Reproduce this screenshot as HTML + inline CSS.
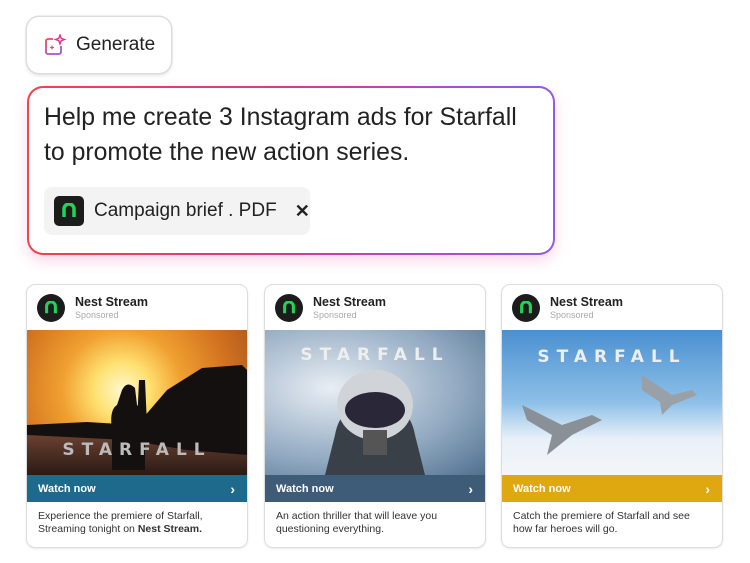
<!DOCTYPE html>
<html><head><style>
*{margin:0;padding:0;box-sizing:border-box}
body{width:750px;height:563px;background:#fff;font-family:"Liberation Sans",sans-serif;position:relative;overflow:hidden;color:#222}
.gen{position:absolute;left:27px;top:17px;width:144px;height:56px;border-radius:12px;box-shadow:0 0 0 1.5px #ddd,0 2px 4px rgba(0,0,0,.15);display:flex;align-items:center;padding-left:17px;font-size:19px;color:#222}
.gen svg{margin-right:10px}
.prompt{position:absolute;left:27px;top:86px;width:528px;height:169px;border-radius:16px;padding:2px;background:linear-gradient(90deg,#f2424a,#d23c8c 50%,#8c5cf0);box-shadow:0 6px 14px rgba(220,60,140,.2)}
.prompt .in{background:#fff;border-radius:14px;width:100%;height:100%;padding:12px 15px}
.prompt p{font-size:24.8px;line-height:35px;color:#222;white-space:nowrap}
.chip{margin-top:17px;width:266px;height:48px;background:#f3f3f3;border-radius:8px;display:flex;align-items:center;padding-left:10px;font-size:19px;color:#222;white-space:nowrap}
.logo{width:30px;height:30px;background:#1c1c1c;border-radius:5px;display:flex;align-items:center;justify-content:center;margin-right:10px;flex:none}
.card{position:absolute;top:285px;width:220px;height:262px;border-radius:8px;box-shadow:0 0 0 1px #ddd,0 1px 3px rgba(0,0,0,.15);overflow:hidden;background:#fff}
.hd{height:45px;display:flex;align-items:center;padding-left:10px}
.av{width:28px;height:28px;border-radius:50%;background:#1c1c1c;display:flex;align-items:center;justify-content:center;margin-right:10px}
.nm{font-size:12.5px;font-weight:bold;color:#222}
.sp{font-size:9px;color:#aaa;margin-top:1px}
.img{height:145px;position:relative;overflow:hidden}
.ttl{position:absolute;left:0;right:0;text-align:center;font-weight:bold;font-size:17px;letter-spacing:7px;color:#eee;font-family:"DejaVu Sans",sans-serif}
.btn{height:27px;color:#fff;font-size:11px;font-weight:bold;display:flex;align-items:center;justify-content:space-between;padding:0 12px 0 11px}
.tx{font-size:10.5px;line-height:13px;padding:8px 11px;color:#333}
</style></head><body>
<div class="gen"><svg width="22" height="22" viewBox="0 0 22 22"><defs><linearGradient id="g" x1="0" y1="0" x2="1" y2="1"><stop offset="0" stop-color="#f04a5a"/><stop offset="1" stop-color="#8a5cf0"/></linearGradient></defs><path d="M9 5H4a2 2 0 0 0-2 2v11a2 2 0 0 0 2 2h11a2 2 0 0 0 2-2v-6" fill="none" stroke="url(#g)" stroke-width="1.8"/><path d="M16 1l1.2 3.3L20.5 5.5 17.2 6.7 16 10 14.8 6.7 11.5 5.5 14.8 4.3z" fill="none" stroke="#d23c8c" stroke-width="1.4"/><path d="M8 11l.7 1.8 1.8.7-1.8.7L8 16l-.7-1.8-1.8-.7 1.8-.7z" fill="#e04070"/></svg>Generate</div>
<div class="prompt"><div class="in"><p>Help me create 3 Instagram ads for Starfall<br>to promote the new action series.</p>
<div class="chip"><div class="logo"><svg width="16" height="16" viewBox="0 0 16 16"><path d="M3 14V6a5 5 0 0 1 10 0v8" fill="none" stroke="#22d35a" stroke-width="3.5"/></svg></div>Campaign brief . PDF<span style="margin-left:18px;font-size:18px;font-weight:bold">✕</span></div></div></div>

<div class="card" style="left:27px"><div class="hd"><div class="av"><svg width="14" height="14" viewBox="0 0 16 16"><path d="M3 14V6a5 5 0 0 1 10 0v8" fill="none" stroke="#22d35a" stroke-width="3.5"/></svg></div><div><div class="nm">Nest Stream</div><div class="sp">Sponsored</div></div></div>
<div class="img" style="background:radial-gradient(circle at 95px 60px,#fff8d0 0,#ffe070 28px,#f0a030 60px,#d07020 110px,#a05020 160px)"><div style="position:absolute;left:0;right:0;bottom:0;height:40px;background:linear-gradient(#6a4030,#2a1a15)"></div><svg style="position:absolute;left:0;top:0" width="220" height="145"><path d="M0 95 L60 92 L110 95 L140 60 L175 38 L215 35 L220 40 V125 L160 120 L100 110 L0 105z" fill="#151010"/><path d="M110 95 L112 50 L118 50 L120 95z" fill="#151010"/><path d="M85 140 V100 Q82 80 90 75 L95 60 Q100 50 108 58 L110 75 Q118 82 118 100 V140z" fill="#151010"/></svg><div class="ttl" style="bottom:15px;color:#bbb">STARFALL</div></div>
<div class="btn" style="background:#1e6a8c">Watch now<span style="font-size:14px">›</span></div>
<div class="tx">Experience the premiere of Starfall,<br>Streaming tonight on <b>Nest Stream.</b></div></div>

<div class="card" style="left:265px"><div class="hd"><div class="av"><svg width="14" height="14" viewBox="0 0 16 16"><path d="M3 14V6a5 5 0 0 1 10 0v8" fill="none" stroke="#22d35a" stroke-width="3.5"/></svg></div><div><div class="nm">Nest Stream</div><div class="sp">Sponsored</div></div></div>
<div class="img" style="background:radial-gradient(ellipse at 30% 40%,#e8eef4,#90a8c0 60%,#50708f)"><svg style="position:absolute;left:0;top:0" width="220" height="145"><path d="M60 145 L70 105 Q75 75 110 65 Q145 75 150 105 L160 145z" fill="#3a4048"/><ellipse cx="110" cy="75" rx="38" ry="35" fill="#d0d4d8"/><ellipse cx="110" cy="80" rx="30" ry="18" fill="#2a2838"/><path d="M98 100 h24 v25 h-24z" fill="#555"/></svg><div class="ttl" style="top:15px">STARFALL</div></div>
<div class="btn" style="background:#3e5c78">Watch now<span style="font-size:14px">›</span></div>
<div class="tx">An action thriller that will leave you<br>questioning everything.</div></div>

<div class="card" style="left:502px"><div class="hd"><div class="av"><svg width="14" height="14" viewBox="0 0 16 16"><path d="M3 14V6a5 5 0 0 1 10 0v8" fill="none" stroke="#22d35a" stroke-width="3.5"/></svg></div><div><div class="nm">Nest Stream</div><div class="sp">Sponsored</div></div></div>
<div class="img" style="background:linear-gradient(#4a90d0,#8ec0e8 50%,#e8f0f8 75%,#f4f6f8)"><svg style="position:absolute;left:0;top:0" width="220" height="145"><path d="M20 75 L60 95 L90 85 L100 90 L70 105 L45 125 L50 105 L25 90z" fill="#8a9098"/><path d="M140 45 L170 65 L190 60 L195 65 L170 75 L160 85 L158 72 L140 60z" fill="#9aa0a8"/></svg><div class="ttl" style="top:17px">STARFALL</div></div>
<div class="btn" style="background:#e0a810">Watch now<span style="font-size:14px">›</span></div>
<div class="tx">Catch the premiere of Starfall and see<br>how far heroes will go.</div></div>
</body></html>
